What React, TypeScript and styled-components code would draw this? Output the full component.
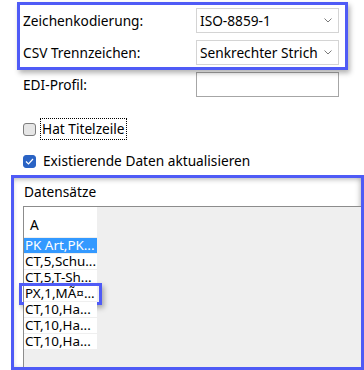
import React from "react";
import styled, { createGlobalStyle } from "styled-components";

const GlobalStyle = createGlobalStyle`
  html, body { margin: 0; padding: 0; background: #ffffff; }
  body { font-family: "Noto Sans", "Open Sans", sans-serif; font-size: 13.7px; color: #000; }
`;

const Page = styled.div`
  width: 364px;
  height: 370px;
  overflow: hidden;
  display: flex;
  flex-direction: column;
`;

const Form = styled.div`
  display: flex;
  flex-direction: column;
  gap: 7px;
  padding: 8px 0 0 23px;
`;

const Group = styled.div`
  position: relative;
  display: flex;
  flex-direction: column;
  gap: 7px;
  width: 316px;
`;

const Highlight = styled.div<{ $inset: string }>`
  position: absolute;
  inset: ${(p) => p.$inset};
  border: 3px solid #4f5bf6;
  box-shadow: 2px 3px 5px rgba(0, 0, 0, 0.3);
  pointer-events: none;
`;

const Row = styled.div`
  display: grid;
  grid-template-columns: 173px 143px;
  align-items: center;
  height: 25px;
`;

const Label = styled.span`
  font-size: 13.7px;
  line-height: 18px;
  white-space: nowrap;
`;

const Select = styled.div`
  box-sizing: border-box;
  height: 25px;
  border: 1px solid #d4d4d4;
  background: #fff;
  display: flex;
  align-items: center;
  justify-content: space-between;
  padding: 0 6px 0 3px;
  font-size: 13.7px;
  white-space: nowrap;
`;

const Input = styled.div`
  box-sizing: border-box;
  height: 25px;
  border: 1px solid #a6a6a6;
  background: #fff;
`;

const Chevron = () => (
  <svg width="8" height="5" viewBox="0 0 8 5">
    <path d="M0.5 0.5 L4 4 L7.5 0.5" fill="none" stroke="#7a7a7a" strokeWidth="1" />
  </svg>
);

const CheckRow = styled.div<{ $top: number }>`
  display: flex;
  align-items: center;
  height: 22px;
  margin-top: ${(p) => p.$top}px;
`;

const Box = styled.span<{ $checked?: boolean }>`
  box-sizing: border-box;
  width: 13px;
  height: 13px;
  border-radius: 3px;
  border: 1px solid ${(p) => (p.$checked ? "#2a63c4" : "#7d7d7d")};
  background: ${(p) => (p.$checked ? "#2a63c4" : "#e6e6e6")};
  display: flex;
  align-items: center;
  justify-content: center;
`;

const CheckText = styled.span<{ $focus?: boolean }>`
  margin-left: ${(p) => (p.$focus ? "4px" : "5px")};
  padding: 1px 1px;
  border: 1px dotted ${(p) => (p.$focus ? "#000" : "transparent")};
  font-size: 13.7px;
  line-height: 18px;
  white-space: nowrap;
`;

const DataGroup = styled.div`
  box-sizing: border-box;
  margin: 3px 0 0 11px;
  width: 353px;
  height: 195px;
  border: 3px solid #4f5bf6;
  box-shadow: inset 0 3px 5px -1px rgba(0, 0, 0, 0.2), inset -3px 0 5px -1px rgba(0, 0, 0, 0.15);
  display: flex;
  flex-direction: column;
`;

const Title = styled.div`
  height: 28px;
  display: flex;
  align-items: center;
  padding: 0 0 2px 10px;
  box-sizing: border-box;
  font-size: 13.7px;
`;

const Grid = styled.div`
  flex: 1;
  margin-left: 9px;
  border-top: 1px solid #8c8c8c;
  border-left: 1px solid #8c8c8c;
  background: #efefef;
`;

const Column = styled.div`
  width: 73px;
  display: flex;
  flex-direction: column;
  gap: 1px;
`;

const Header = styled.div`
  height: 30px;
  background: #fff;
  display: flex;
  align-items: flex-end;
  padding: 0 0 4px 6px;
  box-sizing: border-box;
  font-size: 13.7px;
  line-height: 16px;
`;

const Cell = styled.div<{ $selected?: boolean }>`
  position: relative;
  height: 15px;
  background: ${(p) => (p.$selected ? "#3399ff" : "#ffffff")};
  color: ${(p) => (p.$selected ? "#ffffff" : "#000000")};
  display: flex;
  align-items: center;
`;

const CellText = styled.span`
  display: block;
  width: 100%;
  overflow: hidden;
  white-space: nowrap;
  padding-left: 1px;
  font-size: 13.4px;
  line-height: 15px;
`;

const rows = [
  { t: "PK Art,PK...", sel: true },
  { t: "CT,5,Schu..." },
  { t: "CT,5,T-Sh..." },
  { t: "PX,1,MÃ¤...", hl: true },
  { t: "CT,10,Ha..." },
  { t: "CT,10,Ha..." },
  { t: "CT,10,Ha..." },
];

const Check = () => (
  <svg width="9" height="7" viewBox="0 0 9 7">
    <path d="M1 3.5 L3.5 6 L8 1" fill="none" stroke="#fff" strokeWidth="1.2" />
  </svg>
);

export default function App() {
  return (
    <>
      <GlobalStyle />
      <Page>
        <Form>
          <Group>
            <Row>
              <Label>Zeichenkodierung:</Label>
              <Select>
                <span>ISO-8859-1</span>
                <Chevron />
              </Select>
            </Row>
            <Row>
              <Label>CSV Trennzeichen:</Label>
              <Select>
                <span>Senkrechter Strich</span>
                <Chevron />
              </Select>
            </Row>
            <Highlight $inset="-6px -9px -5px -6px" />
          </Group>
          <Row>
            <Label>EDI-Profil:</Label>
            <Input />
          </Row>
          <CheckRow $top={14}>
            <Box />
            <CheckText $focus>Hat Titelzeile</CheckText>
          </CheckRow>
          <CheckRow $top={3}>
            <Box $checked>
              <Check />
            </Box>
            <CheckText>Existierende Daten aktualisieren</CheckText>
          </CheckRow>
        </Form>
        <DataGroup>
          <Title>Datensätze</Title>
          <Grid>
            <Column>
              <Header>A</Header>
              {rows.map((r, i) => (
                <Cell key={i} $selected={r.sel}>
                  <CellText>{r.t}</CellText>
                  {r.hl && <Highlight $inset="-3px -5px -4px -5px" />}
                </Cell>
              ))}
            </Column>
          </Grid>
        </DataGroup>
      </Page>
    </>
  );
}
